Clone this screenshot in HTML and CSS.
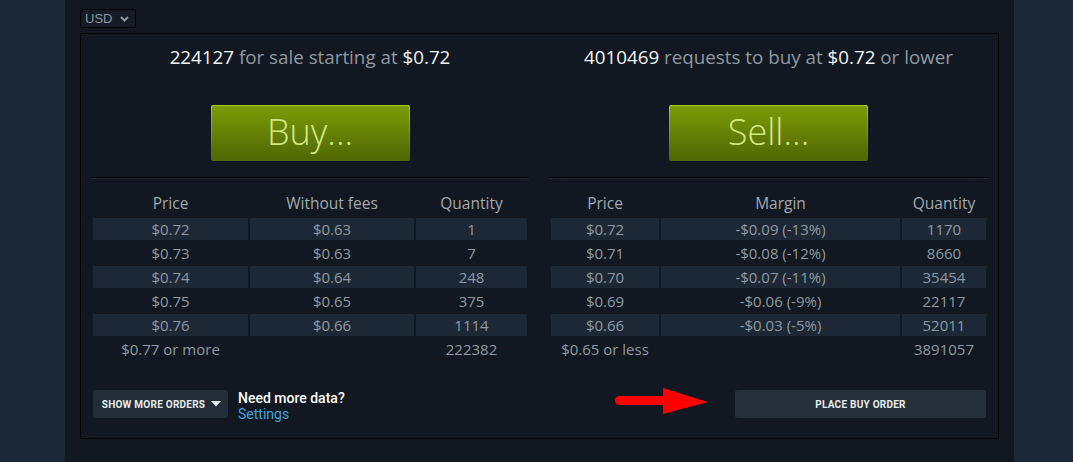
FILE: index.html
```html
<!DOCTYPE html>
<html lang="en">
<head>
<meta charset="utf-8">
<title>Market</title>
<link rel="stylesheet" href="styles.css">
</head>
<body>
<div class="page">
  <div class="side side-left"></div>
  <main class="content">
    <div class="currency">USD
      <svg class="chev" width="9" height="6" viewBox="0 0 9 6"><path d="M1 1 L4.5 4.5 L8 1" fill="none" stroke="#8f98a0" stroke-width="2"/></svg>
    </div>
    <section class="market">
      <div class="col">
        <div class="headline"><span class="num">224127</span> for sale starting at <span class="num">$0.72</span></div>
        <div class="btn-row"><a class="big-btn"><span>Buy...</span></a></div>
        <div class="divider"></div>
        <table class="orders orders-sell">
          <thead>
            <tr><th class="c1">Price</th><th class="c2">Without fees</th><th class="c3">Quantity</th></tr>
          </thead>
          <tbody>
            <tr class="stripe"><td>$0.72</td><td>$0.63</td><td>1</td></tr>
            <tr><td>$0.73</td><td>$0.63</td><td>7</td></tr>
            <tr class="stripe"><td>$0.74</td><td>$0.64</td><td>248</td></tr>
            <tr><td>$0.75</td><td>$0.65</td><td>375</td></tr>
            <tr class="stripe"><td>$0.76</td><td>$0.66</td><td>1114</td></tr>
            <tr><td>$0.77 or more</td><td></td><td>222382</td></tr>
          </tbody>
        </table>
        <div class="actions actions-left">
          <button class="small-btn more-btn">SHOW MORE ORDERS <svg width="10" height="6" viewBox="0 0 10 6"><path d="M0 0 H10 L5 5.5 Z" fill="#e8ecef"/></svg></button>
          <div class="need">
            <div class="need-title">Need more data?</div>
            <a class="need-link">Settings</a>
          </div>
        </div>
      </div>
      <div class="col">
        <div class="headline"><span class="num">4010469</span> requests to buy at <span class="num">$0.72</span> or lower</div>
        <div class="btn-row"><a class="big-btn"><span>Sell...</span></a></div>
        <div class="divider"></div>
        <table class="orders orders-buy">
          <thead>
            <tr><th class="c1">Price</th><th class="c2">Margin</th><th class="c3">Quantity</th></tr>
          </thead>
          <tbody>
            <tr class="stripe"><td>$0.72</td><td>-$0.09 (-13%)</td><td>1170</td></tr>
            <tr><td>$0.71</td><td>-$0.08 (-12%)</td><td>8660</td></tr>
            <tr class="stripe"><td>$0.70</td><td>-$0.07 (-11%)</td><td>35454</td></tr>
            <tr><td>$0.69</td><td>-$0.06 (-9%)</td><td>22117</td></tr>
            <tr class="stripe"><td>$0.66</td><td>-$0.03 (-5%)</td><td>52011</td></tr>
            <tr><td>$0.65 or less</td><td></td><td>3891057</td></tr>
          </tbody>
        </table>
        <div class="actions actions-right">
          <svg class="arrow" width="94" height="27" viewBox="0 0 94 27"><path d="M4.5 8 H49 V17 H4.5 A4.5 4.5 0 0 1 4.5 8 Z" fill="#ff0000"/><path d="M48 0 L93 14 L48 26 Z" fill="#ff0000"/></svg>
          <button class="small-btn place-btn">PLACE BUY ORDER</button>
        </div>
      </div>
    </section>
  </main>
  <div class="side side-right"></div>
</div>
</body>
</html>
```
FILE: styles.css
```css
* { box-sizing: border-box; }
html, body { margin: 0; padding: 0; }
body {
  background: #1b2838;
  font-family: "Open Sans", "Liberation Sans", sans-serif;
  width: 1073px;
  height: 462px;
  overflow: hidden;
}
.page {
  display: flex;
  height: 462px;
}
.side-left { width: 65px; flex: none; }
.side-right { flex: 1; }
.content {
  width: 949px;
  flex: none;
  background: #111821;
  padding: 9px 15px 0 15px;
}
.currency {
  width: 56px;
  height: 19px;
  border: 1px solid #000;
  border-radius: 3px;
  background: #141b25;
  color: #8f98a0;
  font-family: "Liberation Sans", Arial, sans-serif;
  font-size: 13px;
  line-height: 17px;
  padding-left: 4px;
  display: flex;
  align-items: center;
  gap: 8px;
}
.market {
  margin-top: 5px;
  border: 1px solid #000;
  display: grid;
  grid-template-columns: 438px 439px;
  column-gap: 20px;
  padding: 11px 11px 20px 10px;
  height: 406px;
}
.col {
  display: flex;
  flex-direction: column;
}
.headline {
  text-align: center;
  font-size: 18.8px;
  line-height: 24px;
  color: #8f98a0;
  height: 24px;
  white-space: nowrap;
}
.headline .num { color: #f2f4f5; }
.btn-row {
  margin-top: 36px;
  display: flex;
  justify-content: center;
}
.big-btn {
  display: block;
  width: 199px;
  height: 56px;
  padding: 1px;
  border-radius: 2px;
  background: linear-gradient(to bottom, #a4d007 5%, #536904 95%);
}
.big-btn span {
  display: block;
  height: 100%;
  border-radius: 2px;
  background: linear-gradient(to bottom, #799905 5%, #536904 95%);
  color: #d2e885;
  font-size: 36px;
  font-weight: 300;
  line-height: 52px;
  text-align: center;
}
.divider {
  margin-top: 16px;
  height: 2px;
  border-top: 1px solid #000;
  border-bottom: 1px solid #1e2a38;
}
.orders {
  margin-top: 13px;
  width: 100%;
  border-collapse: separate;
  border-spacing: 2px;
  table-layout: fixed;
  font-size: 15px;
}
.orders th, .orders td {
  height: 22px;
  line-height: 22px;
  padding: 0;
  text-align: center;
  white-space: nowrap;
}
.orders th {
  font-weight: 400;
  color: #a2a8ae;
  font-size: 15.5px;
  line-height: 18px;
  padding-bottom: 4px;
}
.orders td { color: #8f98a0; }
.orders .stripe td { background: #1d2837; }
.orders-sell .c1 { width: 155px; }
.orders-sell .c2 { width: 164px; }
.orders-sell .c3 { width: 111px; }
.orders-buy .c1 { width: 108px; }
.orders-buy .c2 { width: 239px; }
.orders-buy .c3 { width: 84px; }
.actions {
  margin-top: 28px;
  height: 28px;
  display: flex;
  align-items: center;
  padding: 0 2px;
}
.actions-right {
  justify-content: flex-end;
  position: relative;
}
.small-btn {
  height: 28px;
  border: none;
  border-radius: 3px;
  background: #232d37;
  color: #e8ecef;
  font-family: Roboto, "Liberation Sans", sans-serif;
  font-weight: 700;
  font-size: 10px;
  letter-spacing: 0.25px;
  padding: 0;
  display: flex;
  align-items: center;
  justify-content: center;
}
.more-btn {
  width: 135px;
  gap: 6px;
  padding-left: 2px;
}
.place-btn {
  width: 251px;
  background: #25303a;
}
.need {
  margin-left: 10px;
  margin-top: 4px;
  font-family: Roboto, "Liberation Sans", sans-serif;
  font-size: 14px;
  line-height: 16px;
}
.need-title {
  color: #ffffff;
  font-weight: 500;
}
.need-link {
  color: #3ea0db;
  display: block;
}
.arrow {
  position: absolute;
  left: 66px;
  top: -2px;
}
```
